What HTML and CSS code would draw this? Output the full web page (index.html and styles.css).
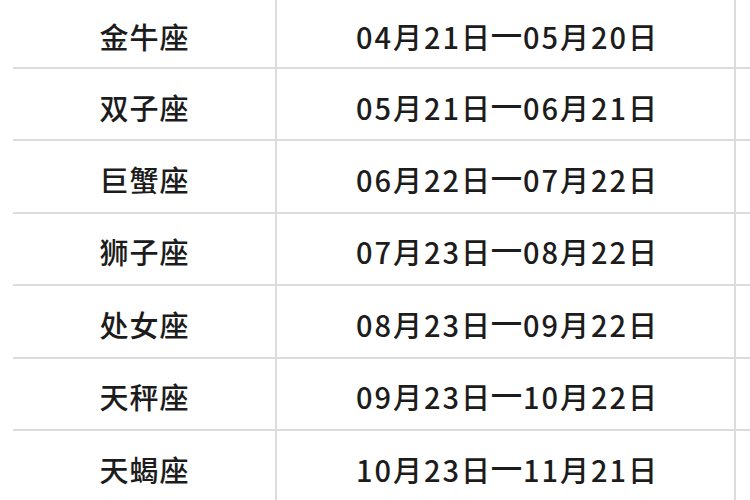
FILE: index.html
```html
<!DOCTYPE html>
<html lang="zh-CN">
<head>
<meta charset="utf-8">
<title>星座日期表</title>
<link rel="stylesheet" href="styles.css">
</head>
<body>
<div class="table">
  <div class="row first"><div class="cell name">金牛座</div><div class="cell date">04月21日<span class="dash">—</span>05月20日</div><div class="cell extra"></div></div>
  <div class="row"><div class="cell name">双子座</div><div class="cell date">05月21日<span class="dash">—</span>06月21日</div><div class="cell extra"></div></div>
  <div class="row"><div class="cell name">巨蟹座</div><div class="cell date">06月22日<span class="dash">—</span>07月22日</div><div class="cell extra"></div></div>
  <div class="row"><div class="cell name">狮子座</div><div class="cell date">07月23日<span class="dash">—</span>08月22日</div><div class="cell extra"></div></div>
  <div class="row"><div class="cell name">处女座</div><div class="cell date">08月23日<span class="dash">—</span>09月22日</div><div class="cell extra"></div></div>
  <div class="row"><div class="cell name">天秤座</div><div class="cell date">09月23日<span class="dash">—</span>10月22日</div><div class="cell extra"></div></div>
  <div class="row"><div class="cell name">天蝎座</div><div class="cell date">10月23日<span class="dash">—</span>11月21日</div><div class="cell extra"></div></div>
</div>
</body>
</html>
```
FILE: styles.css
```css
html, body {
  margin: 0;
  padding: 0;
  background: #ffffff;
}
body {
  width: 750px;
  height: 500px;
  overflow: hidden;
  font-family: "Noto Sans CJK SC", "Noto Sans", sans-serif;
  color: #1c1c1c;
}
.table {
  display: flex;
  flex-direction: column;
  padding-left: 13px;
}
.row {
  display: grid;
  grid-template-columns: 264px 459px 1fr;
  height: 72.4px;
  border-bottom: 2px solid #dcdcdc;
  box-sizing: border-box;
}
.row.first {
  height: 69px;
}
.cell {
  display: flex;
  align-items: center;
  justify-content: center;
  padding-top: 6px;
  box-sizing: border-box;
  font-size: 29px;
  font-weight: 500;
  line-height: 1;
}
.name,
.date {
  border-right: 2px solid #dcdcdc;
}
.name {
  letter-spacing: 1px;
  padding-left: 1px;
}
.date {
  letter-spacing: 2px;
  padding-left: 4px;
}
.dash {
  font-family: "Liberation Sans", "DejaVu Sans", sans-serif;
  font-weight: 700;
  letter-spacing: 0;
  margin-right: 2px;
  position: relative;
  top: -2px;
}
```
